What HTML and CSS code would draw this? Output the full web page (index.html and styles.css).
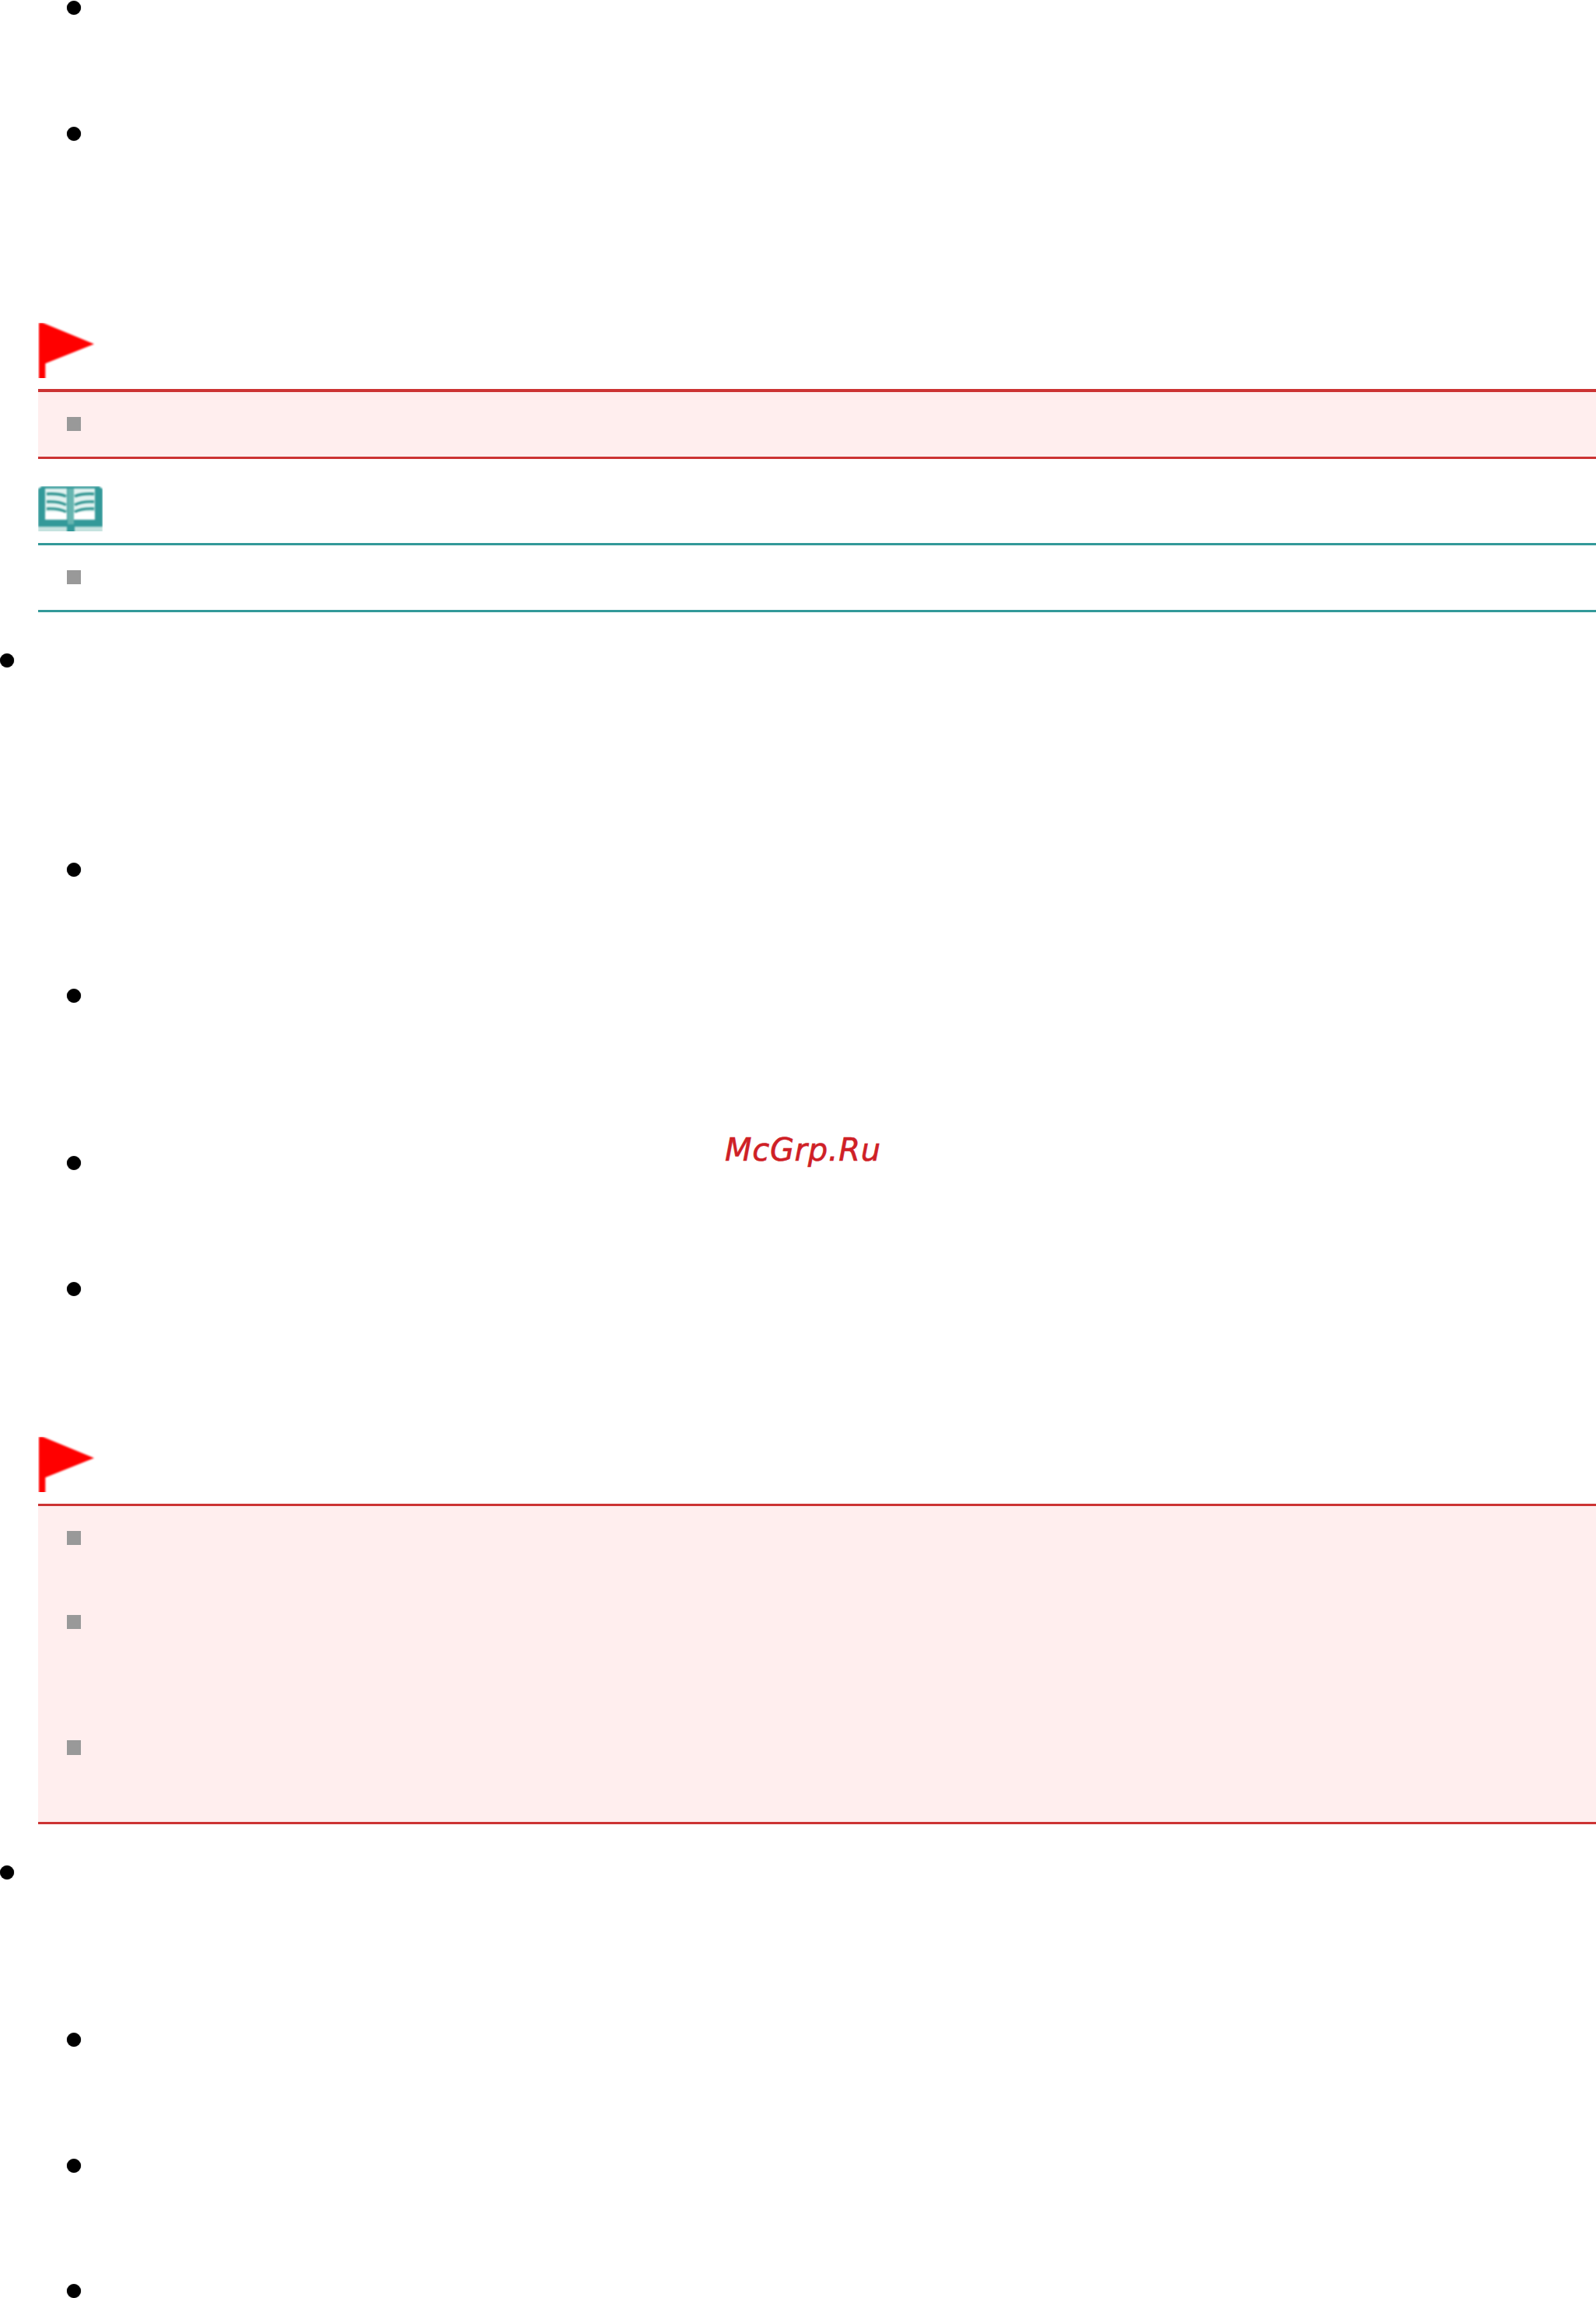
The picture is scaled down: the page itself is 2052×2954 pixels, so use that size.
FILE: index.html
```html
<!DOCTYPE html>
<html lang="ru">
<head>
<meta charset="utf-8">
<title>McGrp.Ru</title>
<link rel="stylesheet" href="styles.css">
</head>
<body>
<main class="page">
  <ul class="list inner">
    <li class="item first-item"></li>
    <li class="item gap-162"></li>
  </ul>

  <section class="notice warn warn-a">
    <svg class="flag" viewBox="0 0 74 71" aria-hidden="true"><polygon class="soft" points="1,0 6,0 72,27.3 9.3,52.3 9.3,75 1,75"/></svg>
    <div class="box box-a"><span class="sq"></span></div>
  </section>

  <section class="notice info">
    <svg class="book" viewBox="0 0 83 58" aria-hidden="true">
      <g class="soft-book">
        <rect class="b-pale" x="0" y="48" width="83" height="12"/>
        <rect class="b-teal" x="37" y="48" width="10" height="12"/>
        <path class="b-teal" d="M0 5Q0 2 3 2L4 0H79L80 2Q83 2 83 5V52H0Z"/>
        <rect class="b-page" x="9" y="3" width="28" height="40"/>
        <rect class="b-page" x="46" y="3" width="27" height="40"/>
        <rect class="b-white" x="9" y="33" width="28" height="10"/>
        <rect class="b-white" x="46" y="33" width="27" height="10"/>
        <rect class="b-spine" x="38" y="3" width="8" height="46"/>
        <path class="b-line" d="M11 10Q26 9 36 13M11 20Q26 19 36 24M11 29Q26 28 36 33"/>
        <path class="b-line" d="M72 10Q57 9 47 13M72 20Q57 19 47 24M72 29Q57 28 47 33"/>
      </g>
    </svg>
    <div class="box box-b"><span class="sq"></span></div>
  </section>

  <ul class="list outer out-a"><li class="item"></li></ul>

  <ul class="list inner in-b">
    <li class="item"></li>
    <li class="item gap-162"></li>
    <li class="item gap-215"></li>
    <li class="item gap-162"></li>
  </ul>

  <section class="notice warn warn-b">
    <svg class="flag" viewBox="0 0 74 71" aria-hidden="true"><polygon class="soft" points="1,0 6,0 72,27.3 9.3,52.3 9.3,75 1,75"/></svg>
    <div class="box box-c">
      <span class="sq"></span>
      <span class="sq sq-2"></span>
      <span class="sq sq-3"></span>
    </div>
  </section>

  <ul class="list outer out-b"><li class="item"></li></ul>

  <ul class="list inner in-c">
    <li class="item"></li>
    <li class="item gap-162"></li>
    <li class="item gap-161"></li>
  </ul>

  <div class="mark">McGrp.Ru</div>
</main>
</body>
</html>
```
FILE: styles.css
```css
html, body {
  margin: 0;
  padding: 0;
  background: #fff;
}
.page {
  position: relative;
  width: 2052px;
  height: 2954px;
  overflow: hidden;
  display: flow-root;
}
.list {
  list-style: none;
  margin: 0;
  padding: 0;
}
.inner { padding-left: 86px; }
.item {
  width: 18px;
  height: 18px;
  border-radius: 50%;
  background: #000;
  box-shadow: 0 0 1px rgba(0, 0, 0, 0.8);
}
.first-item { margin-top: 1px; }
.gap-162 { margin-top: 144px; }
.gap-215 { margin-top: 197px; }
.gap-161 { margin-top: 143px; }

.notice { margin-left: 49px; }
.flag, .book { display: block; overflow: hidden; }
.flag { width: 74px; height: 71px; fill: #f00; }
.soft { filter: blur(1px); }
.book { width: 83px; height: 58px; }
.soft-book { filter: blur(1px); }
.b-teal { fill: #339999; }
.b-pale { fill: #c5e2df; }
.b-page { fill: #e2f2f0; }
.b-white { fill: #fff; }
.b-spine { fill: #66b5b0; }
.b-line { fill: none; stroke: #2f9490; stroke-width: 3.4; }

.box {
  position: relative;
  box-sizing: border-box;
}
.warn .box {
  background: #ffeeee;
  border-top: 4px solid #cc3333;
  border-bottom: 3px solid #cc3333;
  margin-top: 14px;
}
.warn-b .box {
  border-top-width: 3px;
  margin-top: 15px;
}
.info .box {
  border-top: 3px solid #339999;
  border-bottom: 3px solid #339999;
  margin-top: 15px;
}
.box-a { height: 90px; }
.box-b { height: 89px; }
.box-c { height: 412px; }
.box-a, .box-b, .box-c { padding: 32px 0 0 37px; }

.sq {
  display: block;
  width: 18px;
  height: 18px;
  background: #999;
}
.sq-2 { margin-top: 90px; }
.sq-3 { margin-top: 143px; height: 19px; }

.warn-a { margin-top: 234px; }
.info { margin-top: 35px; }
.out-a { margin-top: 53px; }
.in-b { margin-top: 251px; }
.warn-b { margin-top: 181px; }
.out-b { margin-top: 53px; }
.in-c { margin-top: 197px; }

.mark {
  position: absolute;
  left: 932px;
  top: 1454px;
  font-family: "DejaVu Sans", sans-serif;
  font-style: italic;
  font-size: 40px;
  line-height: 48px;
  letter-spacing: 0.7px;
  color: #cf2026;
  -webkit-text-stroke: 0.6px #cf2026;
  white-space: nowrap;
}
```
